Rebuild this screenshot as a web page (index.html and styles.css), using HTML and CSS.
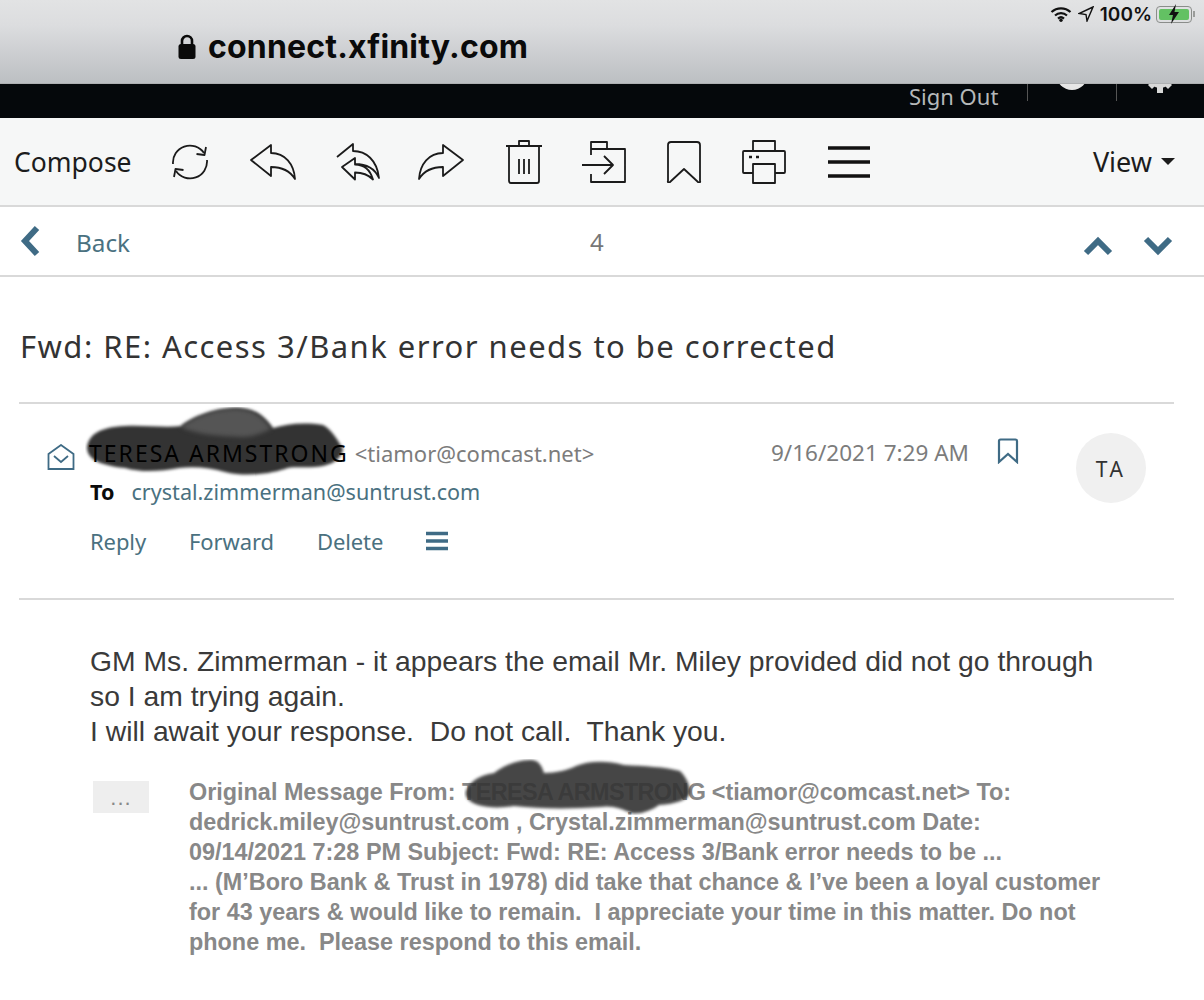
FILE: index.html
```html
<!DOCTYPE html>
<html lang="en">
<head>
    <meta charset="UTF-8">
    <title>connect.xfinity.com</title>
    <link rel="stylesheet" href="styles.css">
</head>
<body>
    <header class="safari-bar">
        <div class="url">
            <svg class="lock" viewBox="0 0 18 26"><path d="M4 11V7a5 5 0 0 1 10 0v4" fill="none" stroke="#0a0a0a" stroke-width="2.6"/><rect x="0.5" y="10" width="17" height="15" rx="2.5" fill="#0a0a0a"/></svg>
            <span>connect.xfinity.com</span>
        </div>
        <div class="status">
            <svg class="wifi" viewBox="0 0 22 16"><path d="M1.5 6a14 14 0 0 1 19 0M5 9.5a9 9 0 0 1 12 0M8 12.6a4.500 4.500 0 0 1 6 0" fill="none" stroke="#111" stroke-width="2.2"/><circle cx="11" cy="14.300" r="1.700" fill="#111"/></svg>
            <svg class="arrow" viewBox="0 0 16 16"><path d="M15 1L1 7.500l7 1 1 6.500z" fill="none" stroke="#111" stroke-width="1.400"/></svg>
            <span>100%</span>
            <span class="battery"><span class="battery-level"></span><svg class="bolt" viewBox="0 0 12 20"><path d="M8 0L1 11h4l-2 9 8-12H6.500z" fill="#111"/></svg></span>
            <span class="battery-tip"></span>
        </div>
    </header>

    <div class="top-nav">
        <span class="sign-out">Sign Out</span>
        <span class="sep"></span>
        <span class="user-dot"></span>
        <span class="sep"></span>
        <svg class="gear" viewBox="0 0 32 32"><circle cx="16" cy="16" r="11"/><path d="M13 0h6v32h-6zM0 13h32v6H0zM4 8l4-4 20 20-4 4zM24 4l4 4L8 28l-4-4z"/><circle class="gear-hole" cx="16" cy="16" r="4"/></svg>
    </div>

    <div class="toolbar">
        <span class="compose">Compose</span>
        <svg class="tool w40" viewBox="0 0 40 36"><path d="M3 20A17 17 0 0 1 34 9M37 16A17 17 0 0 1 6 27"/><path d="M36 3l-1.500 8-8-1M4 33l1.500-8 8 1"/></svg>
        <svg class="tool w46" viewBox="0 0 46 36"><path d="M1 16L21 1v8c14 0 23 11 24 26-5-8-12-12-24-12v9z"/></svg>
        <svg class="tool w44" viewBox="0 0 44 38"><path d="M1 14L17 1v7c13 0 24 9 26 27-4-9-11-14-24-14M6 24l13-9v6.500c9 0 15 5 18 15-5-5-10-7-18-7v7z"/></svg>
        <svg class="tool w46 forward-icon" viewBox="0 0 46 36"><path d="M45 16L25 1v8C11 9 2 20 1 35c5-8 12-12 24-12v9z"/></svg>
        <svg class="tool w36 trash-icon" viewBox="0 0 36 44"><path d="M0 6h36M13 6V1h10v5M3 6v35a2 2 0 0 0 2 2h26a2 2 0 0 0 2-2V6M13 19v15M18 19v15M23 19v15"/></svg>
        <svg class="tool w44" viewBox="0 0 44 42"><path d="M9 14V1h16v7h18v33H9v-8M9 8h16M0 24h31M22 15l9 9-9 9"/></svg>
        <svg class="tool w36" viewBox="0 0 36 42"><path d="M2 4a3 3 0 0 1 3-3h26a3 3 0 0 1 3 3v36a1 1 0 0 1-2 1L18 28 4 41a1 1 0 0 1-2-1z"/></svg>
        <svg class="tool w44" viewBox="0 0 44 44"><path d="M11 11V1h22v10M11 33H2a1 1 0 0 1-1-1V12a1 1 0 0 1 1-1h40a1 1 0 0 1 1 1v20a1 1 0 0 1-1 1H33M11 24h22v19H11z"/><path class="dots" d="M7 17h3M14 17h3"/></svg>
        <svg class="tool w42 menu-icon" viewBox="0 0 42 32"><path class="bars" d="M0 2h42M0 16h42M0 30h42"/></svg>
        <span class="view">View<span class="caret"></span></span>
    </div>

    <div class="msg-nav">
        <svg class="chev-left" viewBox="0 0 20 32"><path d="M17 3L5 16l12 13"/></svg>
        <span class="back">Back</span>
        <span class="count">4</span>
        <span class="updown">
            <svg class="chev-v" viewBox="0 0 30 20"><path d="M3 17L15 5l12 12"/></svg>
            <svg class="chev-v" viewBox="0 0 30 20"><path d="M3 3l12 12L27 3"/></svg>
        </span>
    </div>

    <main class="mail">
        <h1 class="subject">Fwd: RE: Access 3/Bank error needs to be corrected</h1>

        <section class="msg-head">
            <svg class="open-mail" viewBox="0 0 28 26"><path d="M1.500 10L14 1l12.500 9v15h-25zM7 12l7 6 7-6"/></svg>
            <div class="msg-meta">
                <div class="from-row">
                    <svg class="scribble" viewBox="0 0 264 74"><path class="ink" d="M2 40C4 28 14 20 40 19c20-1 40 2 56 0 10-8 30-17 54-18 18 0 28 6 38 20 14-4 30-6 50-3 8 4 14 14 20 24-2 12-14 17-28 18-12 1-24-1-30 2-16 5-40 8-60 3-14-4-30-6-46-4-18 3-36 5-54 0C10 58 2 50 2 40z"/><path class="ink-light" d="M96 20c12-9 32-18 54-18 18 0 28 8 36 20-8 4-18 8-30 8-20-1-44-2-60-10z"/></svg>
                    <span class="from-name">TERESA ARMSTRONG</span>
                    <span class="from-mail">&lt;tiamor@comcast.net&gt;</span>
                </div>
                <div class="to-row"><b>To</b><span class="to-mail">crystal.zimmerman@suntrust.com</span></div>
                <div class="actions">
                    <span>Reply</span>
                    <span>Forward</span>
                    <span>Delete</span>
                    <svg class="small-menu" viewBox="0 0 22 20"><path d="M0 2.500h22M0 10h22M0 17.500h22"/></svg>
                </div>
            </div>
            <div class="msg-date">9/16/2021 7:29 AM</div>
            <svg class="small-mark" viewBox="0 0 22 26"><path d="M2 3a1.500 1.500 0 0 1 1.500-1.500h15A1.500 1.500 0 0 1 20 3v21l-9-8-9 8z"/></svg>
            <div class="avatar">TA</div>
        </section>

        <section class="msg-body">
            <p>GM Ms. Zimmerman - it appears the email Mr. Miley provided did not go through<br>so I am trying again.<br>I will await your response.&nbsp; Do not call.&nbsp; Thank you.</p>
            <div class="quoted">
                <span class="more">...</span>
                <div class="quoted-text">
                    Original Message From: <span class="quoted-name">TERESA ARMSTRONG</span> &lt;tiamor@comcast.net&gt; To:<br>
                    dedrick.miley@suntrust.com , Crystal.zimmerman@suntrust.com Date:<br>
                    09/14/2021 7:28 PM Subject: Fwd: RE: Access 3/Bank error needs to be ...<br>
                    ... (M’Boro Bank &amp; Trust in 1978) did take that chance &amp; I’ve been a loyal customer<br>
                    for 43 years &amp; would like to remain.&nbsp; I appreciate your time in this matter. Do not<br>
                    phone me.&nbsp; Please respond to this email.
                    <svg class="scribble-2" viewBox="0 0 230 56"><path class="ink" d="M2 32C6 22 16 16 30 14 40 6 56 0 68 1c8 1 10 7 12 13 12 0 24-3 32-7 12-5 30-6 48-1 20 1 42 2 56 6 6 6 10 14 10 22-2 7-14 11-31 12-8 6-20 10-28 8-8-4-20-8-30-6-30 2-60 2-87-1-12 2-26 2-36-1C6 44 0 38 2 32z"/></svg>
                </div>
            </div>
        </section>
    </main>
</body>
</html>
```

FILE: styles.css
```css
/* Page */
:root {
    --teal: #3f6b85;
    --teal-text: #4a7180;
    --rule: #d9d9d9;
    --mail-font: "Noto Sans", "Open Sans", sans-serif;
}

* {
    box-sizing: border-box;
}

body {
    margin: 0;
    height: 1000px;
    overflow: hidden;
    background: #fff;
    color: #333;
    font-family: var(--mail-font);
}

/* Browser chrome */
.safari-bar {
    position: relative;
    z-index: 1;
    height: 84px;
    display: flex;
    justify-content: space-between;
    padding: 0 9px 0 178px;
    background: linear-gradient(#e2e3e4 0%, #dcdddf 30%, #bcbfc2 100%);
    border-bottom: 1px solid #aeb0b2;
}

.url {
    display: flex;
    align-items: center;
    gap: 12px;
    height: 93px;
    font-family: Inter, sans-serif;
    font-size: 32px;
    font-weight: 700;
    color: #0a0a0a;
    letter-spacing: 0.18px;
}

.lock {
    width: 18px;
    height: 26px;
}

.status {
    display: flex;
    align-items: center;
    gap: 6px;
    height: 28px;
    font-family: Inter, sans-serif;
    font-size: 19px;
    font-weight: 600;
    color: #111;
}

.wifi {
    width: 22px;
    height: 16px;
}

.arrow {
    width: 16px;
    height: 16px;
}

.battery {
    position: relative;
    width: 36px;
    height: 17px;
    margin-left: -2px;
    padding: 2px;
    border: 1px solid #8a8d8a;
    border-radius: 4px;
}

.battery-level {
    display: block;
    height: 100%;
    background: #63c163;
    border-radius: 2px;
}

.bolt {
    position: absolute;
    left: 11px;
    top: -3px;
    width: 12px;
    height: 20px;
}

.battery-tip {
    width: 2px;
    height: 6px;
    margin-left: -5px;
    background: #9a9c9a;
}

/* Black site nav, its icons slide under the browser bar */
.top-nav {
    height: 34px;
    display: flex;
    align-items: flex-start;
    background: #05080b;
    padding-left: 909px;
}

.sign-out {
    width: 118px;
    font-size: 22px;
    color: #b5b8b9;
    line-height: 24px;
}

.sep {
    width: 1px;
    height: 17px;
    background: #555;
}

.user-dot {
    width: 32px;
    height: 32px;
    margin: -26px 28px 0 28px;
    border-radius: 50%;
    background: #e6e6e6;
}

.gear {
    width: 32px;
    height: 32px;
    margin: -23px 0 0 27px;
    fill: #d8d8d8;
}

.gear-hole {
    fill: #05080b;
}

/* Toolbar */
.toolbar {
    height: 89px;
    display: flex;
    align-items: center;
    gap: 40px;
    padding: 0 29px 0 14px;
    background: #f6f7f7;
    border-bottom: 2px solid var(--rule);
}

.compose,
.view {
    font-size: 26.500px;
    color: #1c1c1c;
}

.compose {
    width: 116px;
}

.tool {
    flex: none;
    fill: none;
    stroke: #1b1b1b;
    stroke-width: 1.800;
    stroke-linejoin: round;
}

.w36 { width: 36px; }
.w40 { width: 40px; }
.w42 { width: 42px; }
.w44 { width: 44px; }
.w46 { width: 46px; }

.forward-icon {
    margin-left: -2px;
}

.trash-icon {
    margin-left: 2px;
}

.menu-icon {
    margin-left: 2px;
}

.bars {
    stroke: #111;
    stroke-width: 3.500;
    stroke-linecap: round;
}

.dots {
    stroke-width: 2.500;
    stroke-dasharray: 3 4;
}

.view {
    display: flex;
    align-items: center;
    gap: 9px;
    margin-left: auto;
    font-size: 27px;
}

.caret {
    width: 0;
    height: 0;
    border-top: 7px solid #1c1c1c;
    border-left: 7px solid transparent;
    border-right: 7px solid transparent;
}

/* Back / next row */
.msg-nav {
    height: 70px;
    display: flex;
    align-items: center;
    padding: 0 31px 0 20px;
    border-bottom: 2px solid var(--rule);
}

.chev-left {
    width: 20px;
    height: 32px;
    fill: none;
    stroke: var(--teal);
    stroke-width: 6;
}

.back {
    margin-left: 36px;
    padding-top: 2px;
    font-size: 24.300px;
    color: var(--teal-text);
}

.count {
    position: absolute;
    left: 590px;
    font-size: 24px;
    color: #777;
}

.updown {
    display: flex;
    gap: 30px;
    margin-left: auto;
    padding-top: 10px;
}

.chev-v {
    width: 30px;
    height: 20px;
    fill: none;
    stroke: var(--teal);
    stroke-width: 6;
}

/* Message */
.mail {
    margin: 0 30px 0 19px;
}

.subject {
    height: 127px;
    margin: 0;
    padding-top: 48px;
    padding-left: 1px;
    font-size: 31px;
    font-weight: 400;
    line-height: 42px;
    letter-spacing: 1.460px;
    color: #333;
    border-bottom: 2px solid var(--rule);
}

.msg-head {
    height: 196px;
    display: flex;
    align-items: flex-start;
    border-bottom: 2px solid var(--rule);
}

.open-mail {
    flex: none;
    width: 28px;
    height: 26px;
    margin: 40px 15px 0 28px;
    fill: none;
    stroke: var(--teal);
    stroke-width: 1.800;
}

.msg-meta {
    width: 681px;
    flex: none;
    padding-top: 32px;
}

.from-row {
    position: relative;
    height: 34px;
    font-size: 23px;
    line-height: 34px;
    white-space: nowrap;
}

.scribble {
    position: absolute;
    left: -5px;
    top: -29px;
    width: 264px;
    height: 74px;
}

.ink {
    fill: #333;
    filter: blur(1.500px);
}

.ink-light {
    fill: #555;
    filter: blur(2px);
}

.from-name {
    position: relative;
    margin-left: -1px;
    letter-spacing: 2px;
    color: #000;
}

.from-mail {
    position: relative;
    font-size: 22px;
    color: #7c7c7c;
}

.to-row {
    display: flex;
    gap: 17px;
    height: 40px;
    margin-top: 2px;
    font-size: 21.600px;
    line-height: 40px;
    color: var(--teal-text);
}

.to-row b {
    color: #0b0b0b;
}

.actions {
    display: flex;
    align-items: center;
    gap: 43px;
    height: 40px;
    margin-top: 9px;
    font-size: 22px;
    letter-spacing: -0.100px;
    color: var(--teal-text);
}

.small-menu {
    width: 22px;
    height: 20px;
    fill: none;
    stroke: var(--teal);
    stroke-width: 3.500;
}

.msg-date {
    flex: none;
    width: 226px;
    padding-top: 32px;
    font-size: 22.500px;
    line-height: 34px;
    color: #7c7c7c;
    white-space: nowrap;
}

.small-mark {
    flex: none;
    width: 22px;
    height: 26px;
    margin-top: 34px;
    fill: none;
    stroke: var(--teal);
    stroke-width: 2.200;
}

.avatar {
    flex: none;
    width: 70px;
    height: 70px;
    margin: 29px 0 0 57px;
    border-radius: 50%;
    background: #f0f0f0;
    font-size: 21px;
    line-height: 72px;
    letter-spacing: 3.500px;
    text-align: center;
    color: #333;
}

/* Body */
.msg-body {
    padding: 44px 0 0 71px;
    font-family: "Liberation Sans", Arial, sans-serif;
}

.msg-body p {
    margin: 0;
    font-size: 28.300px;
    line-height: 35px;
    color: #3a3a3a;
}

.quoted {
    display: flex;
    margin-top: 28px;
}

.more {
    flex: none;
    width: 56px;
    height: 32px;
    margin: 4px 40px 0 3px;
    background: #eee;
    font-size: 22px;
    line-height: 34px;
    letter-spacing: 1px;
    text-align: center;
    color: #888;
}

.quoted-text {
    position: relative;
    font-size: 23.400px;
    font-weight: 700;
    line-height: 30px;
    color: #888;
    white-space: nowrap;
}

.quoted-name {
    letter-spacing: -0.600px;
}

.scribble-2 {
    position: absolute;
    left: 275px;
    top: -18px;
    width: 230px;
    height: 56px;
    opacity: 0.9;
}
```
